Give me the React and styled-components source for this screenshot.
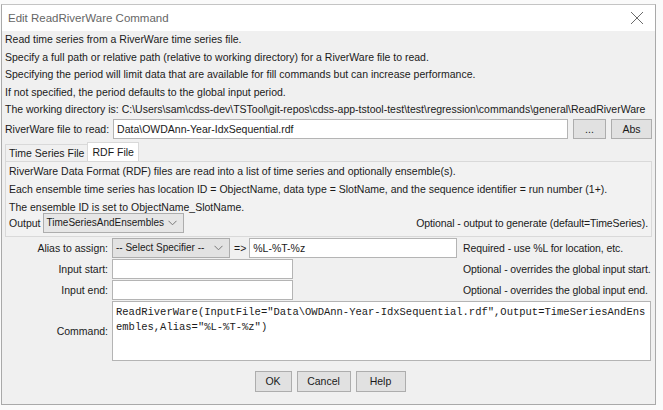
import styled, { createGlobalStyle } from "styled-components";

const GlobalStyle = createGlobalStyle`
  html, body {
    margin: 0;
    padding: 0;
    background: #fafafa;
  }
  * {
    box-sizing: border-box;
  }
`;

const FONT = `"Liberation Sans", Arial, sans-serif`;

const infoLines = [
  "Read time series from a RiverWare time series file.",
  "Specify a full path or relative path (relative to working directory) for a RiverWare file to read.",
  "Specifying the period will limit data that are available for fill commands but can increase performance.",
  "If not specified, the period defaults to the global input period.",
  "The working directory is: C:\\Users\\sam\\cdss-dev\\TSTool\\git-repos\\cdss-app-tstool-test\\test\\regression\\commands\\general\\ReadRiverWare",
];

const rdfLines = [
  "RiverWare Data Format (RDF) files are read into a list of time series and optionally ensemble(s).",
  "Each ensemble time series has location ID = ObjectName, data type = SlotName, and the sequence identifier = run number (1+).",
  "The ensemble ID is set to ObjectName_SlotName.",
];

const Chevron = () => (
  <svg width="9" height="6" viewBox="0 0 9 6">
    <path d="M0.5 0.8 L4.5 4.8 L8.5 0.8" fill="none" stroke="#777" strokeWidth="1" />
  </svg>
);

const App = () => {
  return (
    <Screen>
      <GlobalStyle />
      <Dialog>
        <TitleBar>
          <Title>Edit ReadRiverWare Command</Title>
          <CloseIcon width="14" height="14" viewBox="0 0 14 14">
            <path d="M1 1 L13 13 M13 1 L1 13" stroke="#6b6b6b" strokeWidth="1" />
          </CloseIcon>
        </TitleBar>
        <Body>
          <Info>
            {infoLines.map((l) => (
              <InfoLine key={l}>{l}</InfoLine>
            ))}
          </Info>
          <FileRow>
            <Label>RiverWare file to read:</Label>
            <TextField $grow>Data\OWDAnn-Year-IdxSequential.rdf</TextField>
            <Button $w={33}>...</Button>
            <Button $w={41}>Abs</Button>
          </FileRow>
          <Tabs>
            <Tab>Time Series File</Tab>
            <Tab $active>RDF File</Tab>
          </Tabs>
          <TabPanel>
            {rdfLines.map((l) => (
              <PanelLine key={l}>{l}</PanelLine>
            ))}
            <OutputRow>
              <span>Output</span>
              <Combo $w={141}>
                <span>TimeSeriesAndEnsembles</span>
                <Chevron />
              </Combo>
              <Note $right>Optional - output to generate (default=TimeSeries).</Note>
            </OutputRow>
          </TabPanel>
          <Form>
            <FormLabel>Alias to assign:</FormLabel>
            <AliasBox>
              <Combo $w={118} $gray>
                <span>-- Select Specifier --</span>
                <Chevron />
              </Combo>
              <Arrow>=&gt;</Arrow>
              <TextField $w={208}>%L-%T-%z</TextField>
            </AliasBox>
            <Note>Required - use %L for location, etc.</Note>

            <FormLabel>Input start:</FormLabel>
            <TextField $w={181} />
            <Note>Optional - overrides the global input start.</Note>

            <FormLabel>Input end:</FormLabel>
            <TextField $w={181} />
            <Note>Optional - overrides the global input end.</Note>

            <FormLabel>Command:</FormLabel>
            <CommandArea>
              ReadRiverWare(InputFile="Data\OWDAnn-Year-IdxSequential.rdf",Output=TimeSeriesAndEnsembles,Alias="%L-%T-%z")
            </CommandArea>
          </Form>
          <ButtonBar>
            <Button $w={37} $h={21}>OK</Button>
            <Button $w={54} $h={21}>Cancel</Button>
            <Button $w={50} $h={21}>Help</Button>
          </ButtonBar>
        </Body>
      </Dialog>
    </Screen>
  );
};

const Screen = styled.div`
  width: 663px;
  height: 410px;
  padding: 4px 0 0 1px;
  background: #fafafa;
  overflow: hidden;
  font-family: ${FONT};
`;

const Dialog = styled.div`
  width: 655px;
  height: 401px;
  border: 1px solid #a9a9a9;
  border-top-color: #c4c4c4;
  background: #f0f0f0;
  display: flex;
  flex-direction: column;
`;

const TitleBar = styled.div`
  height: 26px;
  flex: none;
  background: #ffffff;
  display: flex;
  align-items: center;
  justify-content: space-between;
  padding: 0 11px 0 6px;
`;

const Title = styled.div`
  font-size: 11.5px;
  color: #666666;
`;

const CloseIcon = styled.svg`
  display: block;
`;

const Body = styled.div`
  flex: 1;
  display: flex;
  flex-direction: column;
  padding: 0 3px 0 3px;
  font-size: 10.5px;
  color: #1a1a1a;
`;

const Info = styled.div`
  display: flex;
  flex-direction: column;
`;

const InfoLine = styled.div`
  height: 17.5px;
  line-height: 17.5px;
  white-space: nowrap;
`;

const FileRow = styled.div`
  display: flex;
  align-items: center;
  gap: 5px;
  height: 20px;
`;

const Label = styled.div`
  white-space: nowrap;
  margin-right: -1px;
`;

const TextField = styled.div`
  height: 20px;
  line-height: 18px;
  padding: 0 3px;
  background: #ffffff;
  border: 1px solid #b4b4b4;
  white-space: nowrap;
  overflow: hidden;
  width: ${(p) => (p.$w ? `${p.$w}px` : "auto")};
  flex: ${(p) => (p.$grow ? 1 : "none")};
`;

const Button = styled.div`
  width: ${(p) => p.$w}px;
  height: ${(p) => p.$h || 20}px;
  flex: none;
  display: flex;
  align-items: center;
  justify-content: center;
  background: #e1e1e1;
  border: 1px solid #adadad;
  font-size: 10.5px;
  color: #1a1a1a;
`;

const Tabs = styled.div`
  display: flex;
  align-items: flex-end;
  margin-top: 3px;
  height: 19px;
`;

const Tab = styled.div`
  height: ${(p) => (p.$active ? 19 : 17)}px;
  padding: 0 ${(p) => (p.$active ? 4 : 3)}px;
  display: flex;
  align-items: center;
  background: ${(p) => (p.$active ? "#ffffff" : "#f0f0f0")};
  border: 1px solid #d9d9d9;
  border-bottom: none;
  margin-right: ${(p) => (p.$active ? 0 : -1)}px;
  position: relative;
  z-index: ${(p) => (p.$active ? 1 : 0)};
`;

const TabPanel = styled.div`
  border: 1px solid #d9d9d9;
  background: #f2f2f2;
  padding: 0 3px 3px 3px;
  display: flex;
  flex-direction: column;
`;

const PanelLine = styled.div`
  height: 18px;
  line-height: 18px;
  white-space: nowrap;
`;

const OutputRow = styled.div`
  display: flex;
  align-items: center;
  gap: 2px;
  height: 20px;
  margin-top: -3px;
`;

const Combo = styled.div`
  width: ${(p) => p.$w}px;
  height: 20px;
  flex: none;
  display: flex;
  align-items: center;
  justify-content: space-between;
  padding: 0 6px 0 3px;
  background: ${(p) => (p.$gray ? "#e2e2e2" : "#e6e6e6")};
  border: 1px solid #adadad;
  white-space: nowrap;
  font-size: 10px;
`;

const Note = styled.div`
  white-space: nowrap;
  letter-spacing: -0.1px;
  margin-left: ${(p) => (p.$right ? "auto" : "0")};
`;

const Form = styled.div`
  display: grid;
  grid-template-columns: 103px 346px 1fr;
  grid-template-rows: 20px 20px 20px 60px;
  column-gap: 4px;
  row-gap: 1px;
  align-items: center;
  margin-top: 1px;
  & > :nth-child(3n) {
    padding-left: 1px;
  }
`;

const FormLabel = styled.div`
  text-align: right;
  white-space: nowrap;
`;

const AliasBox = styled.div`
  display: flex;
  align-items: center;
  gap: 4px;
`;

const Arrow = styled.span`
  margin-right: -1px;
`;

const CommandArea = styled.div`
  grid-column: 2 / 4;
  height: 60px;
  margin-right: 1px;
  background: #ffffff;
  border: 1px solid #b4b4b4;
  padding: 3px 3px;
  font-family: "Liberation Mono", "Courier New", monospace;
  font-size: 10.5px;
  line-height: 15px;
  word-break: break-all;
  color: #1a1a1a;
`;

const ButtonBar = styled.div`
  display: flex;
  justify-content: center;
  gap: 5px;
  margin-top: 10px;
  padding-left: 3px;
`;

export default App;
